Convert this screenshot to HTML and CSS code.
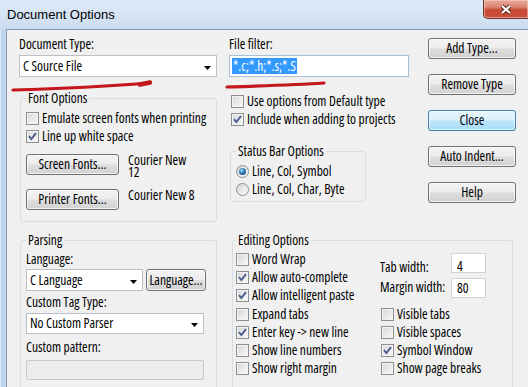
FILE: index.html
```html
<!DOCTYPE html>
<html lang="en">
  <head>
    <meta charset="UTF-8" />
    <title>Document Options</title>
    <link rel="stylesheet" href="styles.css">
  </head>
  <body>
    <div class="window">
      <div class="titlebar">
        <span class="title">Document Options</span>
        <div class="close-x">
          <svg width="14" height="11" viewBox="0 0 14 11">
            <path d="M3 2 L11 9 M11 2 L3 9" stroke="#5b241b" stroke-width="4" fill="none" />
            <path d="M3 2 L11 9 M11 2 L3 9" stroke="#ffffff" stroke-width="2.2" fill="none" />
          </svg>
        </div>
      </div>

      <div class="frame">
        <div class="dialog">
          <div class="top">
            <div class="col-left">
              <div class="label">Document Type:</div>
              <div class="combo">
                <span>C Source File</span>
                <svg class="arrow" width="7" height="4" viewBox="0 0 7 4"><polygon points="0,0 7,0 3.5,4" /></svg>
              </div>

              <fieldset class="group font-group">
                <legend>Font Options</legend>
                <label class="check"><span class="box"></span>Emulate screen fonts when printing</label>
                <label class="check">
                  <span class="box"><svg width="11" height="11" viewBox="0 0 11 11"><path d="M2 5.2 L4.4 8 L9 2.2" /></svg></span>Line up white space
                </label>
                <div class="font-row">
                  <button class="btn font-btn">Screen Fonts...</button>
                  <div class="font-name">Courier New<br />12</div>
                </div>
                <div class="font-row second">
                  <button class="btn font-btn">Printer Fonts...</button>
                  <div class="font-name">Courier New 8</div>
                </div>
              </fieldset>
            </div>

            <div class="col-mid">
              <div class="label">File filter:</div>
              <div class="textbox"><span class="selected">*.c;*.h;*.s;*.S</span></div>

              <div class="mid-checks">
                <label class="check"><span class="box"></span>Use options from Default type</label>
                <label class="check">
                  <span class="box"><svg width="11" height="11" viewBox="0 0 11 11"><path d="M2 5.2 L4.4 8 L9 2.2" /></svg></span>Include when adding to projects
                </label>
              </div>

              <fieldset class="group status-group">
                <legend>Status Bar Options</legend>
                <label class="check"><span class="radio"><span class="dot"></span></span>Line, Col, Symbol</label>
                <label class="check"><span class="radio"></span>Line, Col, Char, Byte</label>
              </fieldset>
            </div>

            <div class="col-right">
              <button class="btn">Add Type...</button>
              <button class="btn">Remove Type</button>
              <button class="btn default">Close</button>
              <button class="btn">Auto Indent...</button>
              <button class="btn">Help</button>
            </div>
          </div>

          <div class="bottom">
            <fieldset class="group parsing">
              <legend>Parsing</legend>
              <div class="label">Language:</div>
              <div class="lang-row">
                <div class="combo lang-combo">
                  <span>C Language</span>
                  <svg class="arrow" width="7" height="4" viewBox="0 0 7 4"><polygon points="0,0 7,0 3.5,4" /></svg>
                </div>
                <button class="btn lang-btn">Language...</button>
              </div>
              <div class="label tag-label">Custom Tag Type:</div>
              <div class="combo tag-combo">
                <span>No Custom Parser</span>
                <svg class="arrow" width="7" height="4" viewBox="0 0 7 4"><polygon points="0,0 7,0 3.5,4" /></svg>
              </div>
              <div class="label pattern-label">Custom pattern:</div>
              <div class="pattern"></div>
            </fieldset>

            <fieldset class="group editing">
              <legend>Editing Options</legend>
              <div class="edit-grid">
                <div class="edit-left">
                  <label class="check row"><span class="box"></span>Word Wrap</label>
                  <label class="check row">
                    <span class="box"><svg width="11" height="11" viewBox="0 0 11 11"><path d="M2 5.2 L4.4 8 L9 2.2" /></svg></span>Allow auto-complete
                  </label>
                  <label class="check row">
                    <span class="box"><svg width="11" height="11" viewBox="0 0 11 11"><path d="M2 5.2 L4.4 8 L9 2.2" /></svg></span>Allow intelligent paste
                  </label>
                  <label class="check row"><span class="box"></span>Expand tabs</label>
                  <label class="check row">
                    <span class="box"><svg width="11" height="11" viewBox="0 0 11 11"><path d="M2 5.2 L4.4 8 L9 2.2" /></svg></span>Enter key -&gt; new line
                  </label>
                  <label class="check row"><span class="box"></span>Show line numbers</label>
                  <label class="check row"><span class="box"></span>Show right margin</label>
                </div>
                <div class="edit-right">
                  <div class="fields">
                    <div class="field tab-field">
                      <span class="field-label">Tab width:</span>
                      <span class="num">4</span>
                    </div>
                    <div class="field">
                      <span class="field-label">Margin width:</span>
                      <span class="num">80</span>
                    </div>
                  </div>
                  <label class="check row"><span class="box"></span>Visible tabs</label>
                  <label class="check row"><span class="box"></span>Visible spaces</label>
                  <label class="check row">
                    <span class="box"><svg width="11" height="11" viewBox="0 0 11 11"><path d="M2 5.2 L4.4 8 L9 2.2" /></svg></span>Symbol Window
                  </label>
                  <label class="check row"><span class="box"></span>Show page breaks</label>
                </div>
              </div>
            </fieldset>
          </div>
        </div>
      </div>

      <!-- red marker strokes drawn over the dialog -->
      <svg class="marks" width="528" height="387" viewBox="0 0 528 387">
        <path d="M13 90 C 50 89, 100 87, 148 83" />
        <path d="M140 84.5 L150 82.5" class="thick" />
        <path d="M227 87 C 260 86, 295 85, 324 83" />
      </svg>
    </div>
  </body>
</html>
```

FILE: styles.css
```css
* {
  margin: 0;
  padding: 0;
  box-sizing: border-box;
}

body {
  width: 528px;
  height: 387px;
  overflow: hidden;
  font-family: "Open Sans", "Liberation Sans", sans-serif;
  font-stretch: 75%;
  font-size: 13.5px;
  line-height: 15px;
  color: #000000;
  background: #f0f0f0;
}

.window {
  position: relative;
  width: 528px;
  height: 387px;
  display: flex;
  flex-direction: column;
  background: linear-gradient(to right, #e8f0f9 0px, #b7cfe9 2px, #c5d8ee 5px, #d3e3f4 100%);
}

/* Title bar */
.titlebar {
  height: 29px;
  display: flex;
  justify-content: space-between;
  align-items: flex-start;
  background: linear-gradient(180deg, #dde9f6 0%, #d4e3f4 60%, #cadcef 100%);
}

.title {
  font-family: "Liberation Sans", sans-serif;
  font-stretch: normal;
  font-size: 13px;
  line-height: 29px;
  padding-left: 7px;
  color: #000000;
}

.close-x {
  width: 45px;
  height: 19px;
  display: flex;
  align-items: center;
  justify-content: center;
  border: 1px solid #6e3329;
  border-top: none;
  border-right: none;
  border-radius: 0 0 0 5px;
  background: linear-gradient(180deg, #e9a999 0%, #d98571 40%, #c74a36 55%, #c8503a 100%);
  box-shadow: inset 0 0 0 1px rgba(255, 220, 210, 0.5);
}

/* Dialog body */
.frame {
  flex: 1;
  display: flex;
  padding-left: 6px;
}

.dialog {
  flex: 1;
  background: #f0f0f0;
  border-top: 1px solid #8a9bb0;
  border-left: 1px solid #8a9bb0;
  padding: 7px 0 0 12px;
}

.top {
  display: flex;
  align-items: flex-start;
}

.col-left {
  width: 198px;
}

.col-mid {
  width: 180px;
  margin-left: 12px;
}

.col-right {
  width: 88px;
  margin-left: 19px;
  padding-top: 1px;
  display: flex;
  flex-direction: column;
  gap: 15px;
}

.label {
  line-height: 15px;
}

.combo {
  height: 22px;
  margin-top: 3px;
  display: flex;
  align-items: center;
  justify-content: space-between;
  background: #ffffff;
  border: 1px solid #bcbfc5;
  padding: 0 5px 0 3px;
}

.arrow {
  margin-top: 3px;
  fill: #000000;
}

.textbox {
  height: 22px;
  margin-top: 3px;
  display: flex;
  align-items: center;
  background: #ffffff;
  border: 1px solid #a9bfd8;
  padding-left: 2px;
}

.selected {
  background: #3399ff;
  color: #ffffff;
  line-height: 16px;
  padding: 0 1px;
}

/* Group boxes */
.group {
  border: 1px solid #d5dfe5;
  border-radius: 3px;
  padding: 3px 5px 11px;
  min-width: 0;
}

.group legend {
  padding: 0 2px;
  line-height: 15px;
}

.font-group {
  margin-top: 14px;
  margin-left: 1px;
}

.status-group {
  width: 136px;
  margin-top: 16px;
  margin-left: 1px;
  padding-bottom: 3px;
}

/* Checkboxes and radios */
.check {
  height: 18px;
  display: flex;
  align-items: center;
  gap: 3px;
  white-space: nowrap;
}

.box {
  width: 13px;
  height: 13px;
  flex-shrink: 0;
  display: flex;
  align-items: center;
  justify-content: center;
  border: 1px solid #8e8f8f;
  background: linear-gradient(135deg, #d4d6d9 0%, #f3f3f3 80%, #fbfbfb 100%);
  box-shadow: inset 0 0 0 1px #f4f4f4;
}

.box path {
  fill: none;
  stroke: #4a5a8c;
  stroke-width: 1.9;
}

.radio {
  width: 13px;
  height: 13px;
  flex-shrink: 0;
  display: flex;
  align-items: center;
  justify-content: center;
  border: 1px solid #8e8f8f;
  border-radius: 50%;
  background: linear-gradient(135deg, #d0d2d5 0%, #f4f4f4 80%);
}

.dot {
  width: 7px;
  height: 7px;
  border-radius: 50%;
  background: radial-gradient(circle at 40% 35%, #a6dcf9 0%, #2d79b5 45%, #123f6e 100%);
}

.mid-checks {
  margin-top: 15px;
  padding-left: 2px;
}

/* Buttons */
.btn {
  height: 21px;
  display: flex;
  align-items: center;
  justify-content: center;
  font: inherit;
  color: #000000;
  border: 1px solid #707070;
  border-radius: 3px;
  background: linear-gradient(180deg, #f3f3f3 0%, #ececec 48%, #dedede 52%, #d2d2d2 100%);
  box-shadow: inset 0 0 0 1px rgba(255, 255, 255, 0.7);
}

.btn.default {
  border-color: #3c7fb1;
  background: linear-gradient(180deg, #e8f5fd 0%, #d9f0fc 48%, #bee6fd 52%, #a9dbf6 100%);
  box-shadow: inset 0 0 0 1px rgba(255, 255, 255, 0.6);
}

.font-row {
  height: 21px;
  display: flex;
  align-items: flex-start;
  gap: 9px;
  margin-top: 9px;
}

.font-row.second {
  margin-top: 14px;
}

.font-btn {
  width: 93px;
}

.font-name {
  line-height: 12px;
}

/* Bottom groups */
.bottom {
  display: flex;
  align-items: flex-start;
  gap: 15px;
  margin-top: 11px;
  padding-left: 1px;
}

.parsing {
  width: 197px;
  padding: 4px 5px 20px;
}

.lang-row {
  display: flex;
  gap: 3px;
  margin-top: 2px;
}

.lang-combo {
  width: 117px;
  height: 22px;
  margin-top: 0;
}

.lang-btn {
  width: 60px;
  height: 22px;
}

.tag-label {
  margin-top: 4px;
}

.tag-combo {
  width: 178px;
  height: 21px;
}

.pattern-label {
  margin-top: 6px;
}

.pattern {
  width: 178px;
  height: 20px;
  margin-top: 5px;
  border: 1px solid #c9c9c9;
  border-radius: 2px;
  background: #ececec;
}

.editing {
  width: 281px;
  padding: 2px 3px 20px;
}

.edit-grid {
  display: flex;
}

.edit-left {
  width: 144px;
}

.row {
  height: 18.3px;
}

.edit-right {
  flex: 1;
}

.edit-right .row {
  margin-left: 1px;
}

.fields {
  height: 54.9px;
}

.field {
  height: 25px;
  display: flex;
  align-items: center;
}

.field-label {
  width: 71px;
}

.tab-field .field-label {
  padding-top: 10px;
}

.num {
  width: 35px;
  height: 20px;
  padding-left: 5px;
  line-height: 19px;
  background: #ffffff;
  border: 1px solid #d3d3d3;
}

.tab-field .num {
  padding-top: 3px;
}

/* Red marker strokes */
.marks {
  position: absolute;
  top: 0;
  left: 0;
  pointer-events: none;
}

.marks path {
  fill: none;
  stroke: #c4161c;
  stroke-width: 3.2;
  stroke-linecap: round;
}

.marks path.thick {
  stroke-width: 4.5;
}
```
